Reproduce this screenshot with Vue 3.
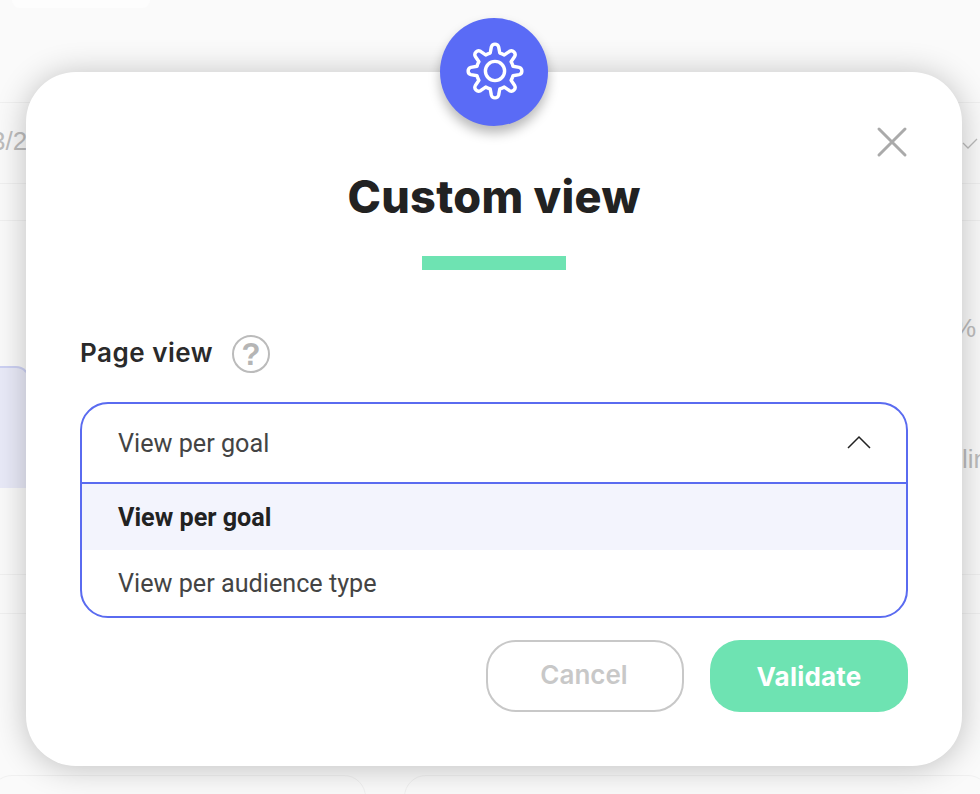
<script setup>
import { computed } from 'vue'

const gearPath = computed(() => {
  const cx = 32, cy = 32, teeth = 8
  const outer = 24.4, inner = 18.6
  const pts = []
  for (let i = 0; i < teeth; i++) {
    const a = (i * 2 * Math.PI) / teeth - Math.PI / 2
    const w = 0.15
    const v = 0.26
    pts.push([a - v, inner], [a - w, outer], [a + w, outer], [a + v, inner])
  }
  const xy = pts.map(([a, r]) => [(cx + r * Math.cos(a)).toFixed(2), (cy + r * Math.sin(a)).toFixed(2)])
  let d = `M${xy[0][0]} ${xy[0][1]}`
  for (let i = 1; i < xy.length; i++) {
    if (i % 4 === 2) {
      d += ` A3.8 3.8 0 0 1 ${xy[i][0]} ${xy[i][1]}`
    } else if (i % 4 === 0) {
      d += ` A18.6 18.6 0 0 1 ${xy[i][0]} ${xy[i][1]}`
    } else {
      d += ` L${xy[i][0]} ${xy[i][1]}`
    }
  }
  return d + ` A18.6 18.6 0 0 1 ${xy[0][0]} ${xy[0][1]}Z`
})
</script>

<template>
  <div class="page">
    <div class="backdrop">
      <div class="top-card"></div>
      <div class="row row-a"></div>
      <div class="row row-b">
        <span class="faint cut-left">3/2</span>
        <svg class="tick" width="16" height="12" viewBox="0 0 16 12"><path d="M1 6l5 5 9-9" fill="none" stroke="#bbb" stroke-width="1.3" /></svg>
      </div>
      <div class="row row-c"></div>
      <div class="row row-d"><span class="faint percent">%</span></div>
      <div class="lilac-row">
        <div class="lilac"></div>
        <span class="faint lin">lin</span>
      </div>
      <div class="row row-e"></div>
      <div class="row row-f"></div>
      <div class="row row-g"></div>
      <div class="bottom-cards">
        <div class="bottom-card first"></div>
        <div class="bottom-card second"></div>
      </div>
    </div>

    <section class="modal">
      <div class="badge">
        <svg width="64" height="64" viewBox="0 0 64 64" fill="none" stroke="#fff" stroke-width="3.4" stroke-linejoin="round">
          <path :d="gearPath" />
          <circle cx="32" cy="32" r="9.6" />
        </svg>
      </div>
      <button class="close" aria-label="Close">
        <svg width="32" height="32" viewBox="0 0 32 32"><path d="M3 3l26 26M29 3L3 29" stroke="#aaa" stroke-width="3" stroke-linecap="round" /></svg>
      </button>

      <h1 class="title">Custom view</h1>
      <div class="accent"></div>

      <div class="label-row">
        <span class="label">Page view</span>
        <span class="help">?</span>
      </div>

      <div class="select">
        <div class="select-head">
          <span>View per goal</span>
          <svg class="chev" width="24" height="14" viewBox="0 0 24 14"><path d="M1 13L12 2l11 11" fill="none" stroke="#222" stroke-width="1.5" /></svg>
        </div>
        <div class="option selected">View per goal</div>
        <div class="option">View per audience type</div>
      </div>

      <div class="actions">
        <button class="btn cancel"><span>Cancel</span></button>
        <button class="btn validate">Validate</button>
      </div>
    </section>
  </div>
</template>

<style scoped>
.page {
  position: relative;
  width: 980px;
  height: 794px;
  overflow: hidden;
  background: #fafafa;
  font-family: "Roboto", "Liberation Sans", sans-serif;
}
.backdrop {
  display: flex;
  flex-direction: column;
  height: 794px;
}
.top-card {
  width: 138px;
  height: 8px;
  margin-left: 12px;
  background: #fdfdfd;
  border-radius: 0 0 16px 16px;
}
.row {
  display: flex;
  align-items: center;
  justify-content: space-between;
  border-bottom: 1.5px solid #f0f0f0;
  box-sizing: border-box;
}
.row-a { height: 95px; }
.row-b { height: 80.5px; align-items: flex-start; padding-top: 23px; }
.row-c { height: 37.5px; }
.row-d { height: 145px; border-bottom: none; align-items: flex-start; padding-top: 92px; }
.row-e { height: 87px; }
.row-f { height: 38.7px; }
.row-g { height: 161.3px; border-bottom: none; }
.faint {
  color: #bdbdbd;
  font-family: "Liberation Sans", sans-serif;
  font-size: 26px;
  line-height: 30px;
}
.cut-left { margin-left: -9px; }
.percent { margin-left: auto; margin-right: 4px; }
.tick { margin-right: 2px; margin-top: 11px; }
.lilac-row {
  display: flex;
  align-items: center;
  height: 122px;
}
.lilac {
  width: 30px;
  height: 122px;
  box-sizing: border-box;
  background: #e9eaf8;
  border-top: 2px solid #cdd1f3;
  border-right: 2px solid #cdd1f3;
  border-top-right-radius: 14px;
}
.lin { margin-left: auto; margin-right: -8px; margin-top: 64px; }
.bottom-cards {
  display: flex;
  gap: 38px;
  height: 19px;
  overflow: hidden;
}
.bottom-card {
  height: 40px;
  border: 1.5px solid #f0f0f0;
  border-radius: 22px 22px 0 0;
  box-sizing: border-box;
}
.bottom-card.first { width: 376px; margin-left: -10px; }
.bottom-card.second { flex: 1; margin-right: -10px; }

.modal {
  position: absolute;
  left: 26px;
  top: 72px;
  width: 936px;
  height: 694px;
  box-sizing: border-box;
  padding: 0 54px;
  display: flex;
  flex-direction: column;
  background: #fff;
  border-radius: 50px;
  box-shadow: 0 2px 32px rgba(0, 0, 0, 0.24);
}
.badge {
  position: absolute;
  left: 414px;
  top: -54px;
  width: 108px;
  height: 108px;
  border-radius: 50%;
  background: #5a6bf6;
  box-shadow: 0 7px 12px rgba(0, 0, 0, 0.28);
  display: flex;
  align-items: center;
  justify-content: center;
}
.badge svg { margin-top: -3px; margin-left: 1px; }
.close {
  position: absolute;
  top: 54px;
  right: 54px;
  width: 32px;
  height: 32px;
  padding: 0;
  border: 0;
  background: none;
  display: block;
}
.close svg { display: block; }
.title {
  margin: 100px 0 0;
  text-align: center;
  font-family: "Inter", "Liberation Sans", sans-serif;
  font-size: 45px;
  letter-spacing: 0.3px;
  line-height: 50px;
  font-weight: 800;
  color: #222;
}
.accent {
  align-self: center;
  width: 144px;
  height: 14px;
  margin-top: 34px;
  background: #6ee3b2;
}
.label-row {
  display: flex;
  align-items: center;
  gap: 19px;
  height: 40px;
  margin-top: 64px;
}
.label {
  font-family: "Inter", "Liberation Sans", sans-serif;
  font-size: 26px;
  letter-spacing: 0.5px;
  line-height: 38px;
  margin-top: -2px;
  font-weight: 600;
  color: #2a2a2a;
}
.help {
  box-sizing: border-box;
  width: 38px;
  height: 38px;
  border: 2px solid #bbb;
  border-radius: 50%;
  color: #b5b5b5;
  font-family: "Liberation Sans", sans-serif;
  font-weight: 700;
  font-size: 31px;
  line-height: 35px;
  text-align: center;
}
.select {
  box-sizing: border-box;
  height: 216px;
  margin-top: 28px;
  border: 2px solid #5a6bf0;
  border-radius: 28px;
  overflow: hidden;
  font-size: 25.2px;
  color: #444;
}
.select-head {
  box-sizing: border-box;
  height: 80px;
  padding: 0 35px 0 36px;
  display: flex;
  align-items: center;
  justify-content: space-between;
  border-bottom: 2px solid #5a6bf0;
}
.chev { margin-top: -2px; }
.option {
  height: 66px;
  padding: 0 36px;
  display: flex;
  align-items: center;
}
.option.selected {
  background: #f3f4fd;
  font-weight: 700;
  color: #222;
}
.actions {
  display: flex;
  justify-content: flex-end;
  gap: 26px;
  margin-top: 22px;
}
.btn {
  box-sizing: border-box;
  width: 198px;
  height: 72px;
  border-radius: 30px;
  font-family: "Inter", "Liberation Sans", sans-serif;
  font-size: 26px;
  font-weight: 600;
}
.cancel {
  background: #fff;
  border: 2px solid #c8c8c8;
  color: #c8c8c8;
  padding: 0 2px 3px 0;
}
.validate {
  background: #6ee3b2;
  border: 0;
  color: #fff;
  font-weight: 700;
  letter-spacing: 0.2px;
}
</style>

<style>
html, body { margin: 0; overflow: hidden; }
</style>
